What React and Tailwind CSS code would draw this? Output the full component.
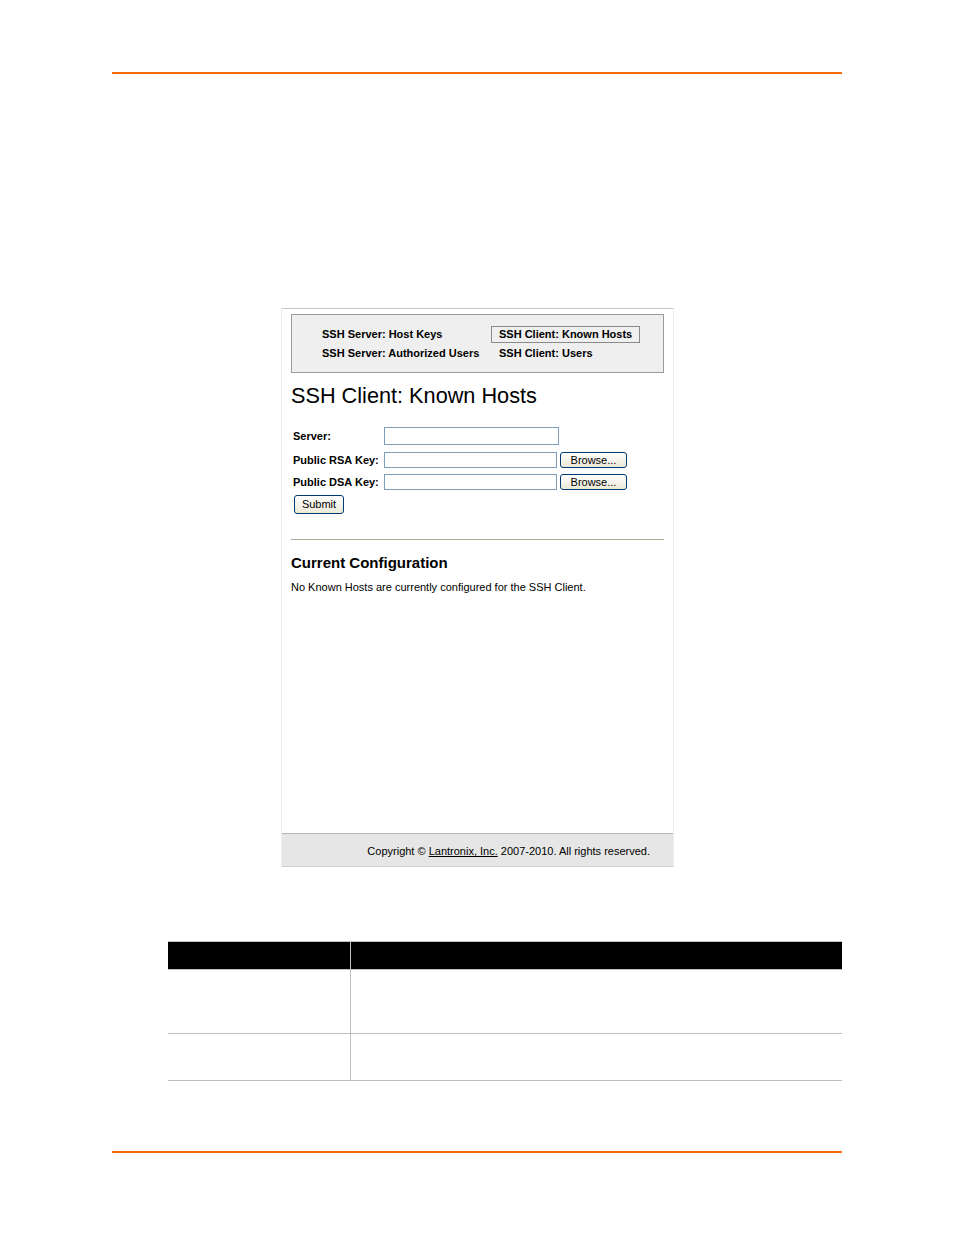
export default function App() {
  const navItem = "flex items-center h-[17px] px-[7px] border whitespace-nowrap";
  const btn =
    "flex items-center justify-center rounded-[3px] border border-[#003c74] bg-gradient-to-b from-white to-[#ece9d8] text-[11px] leading-none text-black";
  return (
    <div className="w-[954px] h-[1235px] bg-white font-['Liberation_Sans',Arial,sans-serif] text-black">
      <div className="pt-[72px]">
        <div className="ml-[112px] w-[730px] h-[2px] bg-[#f96a0d]" />

        {/* Screenshot frame */}
        <div className="ml-[281px] mt-[234px] w-[393px] h-[559px] flex flex-col border-t border-l border-r border-t-[#c8c8c8] border-l-[#eeeeee] border-r-[#eeeeee]">
          <div className="flex-1 pl-[9px] pt-[5px]">
            {/* nav box */}
            <div className="w-[373px] h-[59px] border border-[#9c9c9c] bg-[#efefef] pl-[22px] pt-[11px]">
              <div className="grid grid-cols-[177px_auto] gap-y-[2px] text-[11px] font-bold leading-[15px]">
                <div className={navItem + " border-transparent"}>SSH Server: Host Keys</div>
                <div className={navItem + " border-[#8a8a8a] w-[149px]"}>SSH Client: Known Hosts</div>
                <div className={navItem + " border-transparent"}>SSH Server: Authorized Users</div>
                <div className={navItem + " border-transparent"}>SSH Client: Users</div>
              </div>
            </div>

            <h1 className="mt-[10px] text-[21.7px] leading-[26px] font-normal">SSH Client: Known Hosts</h1>

            {/* form */}
            <div className="mt-[18px] flex flex-col text-[11px]">
              <div className="flex h-[18px]">
                <div className="w-[93px] pl-[2px] flex items-center font-bold">Server:</div>
                <div className="w-[175px] h-[18px] border border-[#7f9db9] bg-white" />
              </div>
              <div className="mt-[7px] flex h-[16px]">
                <div className="w-[93px] pl-[2px] flex items-center font-bold whitespace-nowrap">Public RSA Key:</div>
                <div className="w-[173px] h-[16px] border border-[#7f9db9] bg-white" />
                <div className={btn + " ml-[3px] w-[67px] h-[16px]"}>Browse...</div>
              </div>
              <div className="mt-[6px] flex h-[16px]">
                <div className="w-[93px] pl-[2px] flex items-center font-bold whitespace-nowrap">Public DSA Key:</div>
                <div className="w-[173px] h-[16px] border border-[#7f9db9] bg-white" />
                <div className={btn + " ml-[3px] w-[67px] h-[16px]"}>Browse...</div>
              </div>
              <div className="mt-[5px] flex">
                <div className={btn + " ml-[3px] w-[50px] h-[19px]"}>Submit</div>
              </div>
            </div>

            <div className="mt-[25px] w-[373px] h-px bg-[#aca899]" />

            <h2 className="mt-[14px] text-[15px] leading-[18px] font-bold">Current Configuration</h2>
            <p className="mt-[8px] text-[11px] leading-[14px]">
              No Known Hosts are currently configured for the SSH Client.
            </p>
          </div>

          {/* footer */}
          <div className="h-[34px] border-t border-b border-t-[#b4b4b4] border-b-[#cfcfcf] bg-[#e6e6e6] pt-[10px] pr-[23px] text-right text-[11px] leading-[14px]">
            Copyright © <span className="underline">Lantronix, Inc.</span> 2007-2010. All rights reserved.
          </div>
        </div>

        {/* table */}
        <div className="ml-[168px] mt-[74px] w-[674px] border-t border-[#bfbfbf]">
          <div className="grid grid-cols-[183px_1fr] h-[28px] border-b border-[#bfbfbf]">
            <div className="bg-black border-r border-[#bfbfbf]" />
            <div className="bg-black" />
          </div>
          <div className="grid grid-cols-[183px_1fr] h-[64px] border-b border-[#bfbfbf]">
            <div className="border-r border-[#bfbfbf]" />
            <div />
          </div>
          <div className="grid grid-cols-[183px_1fr] h-[47px] border-b border-[#bfbfbf]">
            <div className="border-r border-[#bfbfbf]" />
            <div />
          </div>
        </div>

        <div className="ml-[112px] mt-[70px] w-[730px] h-[2px] bg-[#f96a0d]" />
      </div>
    </div>
  );
}
